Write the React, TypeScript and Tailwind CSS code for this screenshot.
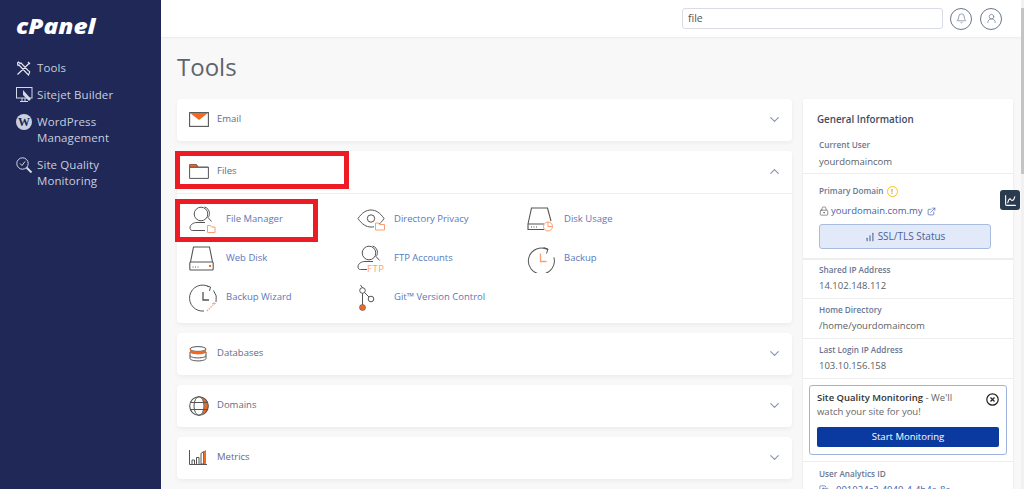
import React from "react";
import { ChevronDown, ChevronUp, Bell, UserRound, ExternalLink, LockKeyhole, ChartNoAxesColumnIncreasing, ChartSpline, Copy } from "lucide-react";

const D = "#555555";
const O = "#f26a21";
const L = "#fb9f72";

const Svg = ({ w, h, children }: { w: number; h: number; children: React.ReactNode }) => (
  <svg width={w} height={h} viewBox={`0 0 ${w} ${h}`} fill="none" className="shrink-0">{children}</svg>
);

const MailIcon = () => (
  <Svg w={20} h={15}>
    <rect x="0.600" y="0.600" width="18.800" height="13.800" stroke={D} strokeWidth="1.100" />
    <path d="M1 1h18l-9 7z" fill={O} />
  </Svg>
);
const FolderIcon = () => (
  <Svg w={20} h={15}>
    <path d="M0.600 4V14.400H19.400V3H9L7.500 0.600H0.600z" stroke={D} strokeWidth="1" />
    <path d="M0.600 3V0.600H7.500L9 3H19.400V4H0.600z" fill="#b5532a" />
    <path d="M1 2.200V1h6l.8 1.200z" fill={O} />
  </Svg>
);
const DbIcon = () => (
  <Svg w={18} h={16}>
    <ellipse cx="9" cy="3" rx="8" ry="2.400" stroke={D} strokeWidth="1" />
    <path d="M1 3v3c0 1.300 3.600 2.400 8 2.400s8-1.100 8-2.400V3c0 1.300-3.600 2.400-8 2.400S1 4.300 1 3z" fill={O} />
    <path d="M1 6v3.500c0 1.300 3.600 2.400 8 2.400s8-1.100 8-2.400V6M1 9.500v3c0 1.300 3.600 2.400 8 2.400s8-1.100 8-2.400v-3" stroke={D} strokeWidth="1" />
  </Svg>
);
const GlobeIcon = () => (
  <Svg w={20} h={20}>
    <path d="M12.500 1.300C14.600 4.500 15.300 7 15.300 10s-.7 5.500-2.800 8.700A9.400 9.400 0 0 0 19.400 10 9.400 9.400 0 0 0 12.500 1.300z" fill={O} />
    <circle cx="10" cy="10" r="9.300" stroke={D} strokeWidth="1.100" />
    <ellipse cx="10" cy="10" rx="5" ry="9.300" stroke={D} strokeWidth="1" />
    <path d="M1.500 6.500h17M1.500 13.500h17" stroke={D} strokeWidth="1" />
  </Svg>
);
const MetricsIcon = () => (
  <Svg w={18} h={15}>
    <path d="M0.500 0v14.500H18" stroke={D} strokeWidth="1" />
    <path d="M3 14v-4h2.500v4M7.500 14V7.500H10V14" stroke={D} strokeWidth="1" />
    <path d="M12 14V3.500l2.500-2V14z" stroke={D} strokeWidth="1" />
    <path d="M14.500 14V1.500L17 0v14z" fill={O} />
  </Svg>
);
const PersonBase = () => (
  <>
    <circle cx="12" cy="8" r="6.800" stroke={D} strokeWidth="1" />
    <path d="M15.500 1c3 .8 5 3.400 5 6.500 0 1.500-.5 2.800-1.500 4l3.500 4" stroke={D} strokeWidth="1" />
    <path d="M16 24.500H3.500C1.500 24.500 1 23 1 22c0-3.500 3.500-5.500 7-5.500h8" stroke={D} strokeWidth="1" />
  </>
);
const FileMgrIcon = () => (
  <Svg w={27} h={27}>
    <PersonBase />
    <path d="M18.500 19.500h3l1 1.500h3.500v5.500h-7.500z" stroke={L} strokeWidth="1" fill="#fff" />
  </Svg>
);
const FtpIcon = () => (
  <Svg w={32} h={27}>
    <PersonBase />
    <rect x="10" y="18" width="22" height="9" fill="#fff" />
    <text x="10" y="26.500" fontFamily="Open Sans, sans-serif" fontSize="9.500" fill={L} letterSpacing="0.500">FTP</text>
  </Svg>
);
const EyeIcon = () => (
  <Svg w={29} h={23}>
    <path d="M1 10.500C5 4.500 9.500 2 14 2s9 2.500 13 8.500c-1.500 2.500-3.200 4.300-5 5.500M17 18.800c-1 .2-2 .2-3 .2-4.500 0-9-2.500-13-8.500" stroke={D} strokeWidth="1" />
    <circle cx="14" cy="10.500" r="3.700" stroke={D} strokeWidth="1" />
    <path d="M18.500 15h3l1 1.500h5v5.500h-9z" stroke={L} strokeWidth="1" fill="#fff" />
  </Svg>
);
const DiskUsageIcon = () => (
  <Svg w={27} h={25}>
    <path d="M1 17V22.500H17M1 17L4.500 1H20.500L24 14M1 17H17" stroke={D} strokeWidth="1.100" />
    <path d="M4 20h1M6.500 20h1M9 20h1" stroke={D} strokeWidth="1.200" />
    <circle cx="21" cy="19.500" r="4.500" stroke={L} strokeWidth="1" fill="#fff" />
    <path d="M21 15v4.500h4.500" stroke={L} strokeWidth="1" />
  </Svg>
);
const WebDiskIcon = () => (
  <Svg w={25} h={25}>
    <path d="M1.500 16L4.500 1H20.500L23.500 16" stroke={D} strokeWidth="1.100" />
    <rect x="0.800" y="16" width="23.400" height="8" rx="1" stroke={D} strokeWidth="1.100" />
    <path d="M3.500 21h1M6 21h1M8.500 21h1" stroke={D} strokeWidth="1.200" />
    <rect x="20" y="19" width="2" height="2" fill={O} />
  </Svg>
);
const BackupIcon = () => (
  <Svg w={28} h={28}>
    <path d="M20 4.200A13 13 0 1 0 26.500 11" stroke={D} strokeWidth="1" transform="rotate(6 14 15)" />
    <path d="M16.500 2.500l4.500 1.500-1.500 4.500" stroke={D} strokeWidth="1" />
    <path d="M13.500 8.500v8h6" stroke={L} strokeWidth="1.300" />
  </Svg>
);
const WizardIcon = () => (
  <Svg w={29} h={28}>
    <path d="M20 2.800A13 13 0 1 0 15 27M27 18A13 13 0 0 0 24.500 6.500" stroke={D} strokeWidth="1" />
    <path d="M18 2l3.500 1-1 4" stroke={D} strokeWidth="1" />
    <path d="M14 8v8h6" stroke={D} strokeWidth="1.300" />
    <path d="M18 27l6-6" stroke={L} strokeWidth="1.200" strokeDasharray="1.500 1" />
    <path d="M25 18v3M23 19.500h4" stroke={L} strokeWidth="0.800" />
  </Svg>
);
const GitIcon = () => (
  <Svg w={18} h={26}>
    <circle cx="5.500" cy="5.500" r="2.800" stroke={D} strokeWidth="1" />
    <circle cx="14" cy="14" r="2.800" stroke={D} strokeWidth="1" />
    <path d="M5.500 8.300V20.500M7.500 7.500l4.500 4.500M5.500 2.700L3.500 0" stroke={D} strokeWidth="1" />
    <circle cx="5.500" cy="22.500" r="3" fill={O} stroke={D} strokeWidth="0.600" />
  </Svg>
);
const ToolsIcon = () => (
  <Svg w={15} h={15}>
    <path d="M1.500 13.500L13.500 2M12 1l2 2M1.500 2.500c0-.5.500-1.200 1-1.500l1.500 1.500 1-.5 7.500 8c1-.2 1.500.5 1 1.500l-1 2.500-2-2-7.500-8-1 .5z" stroke="#e8ebf3" strokeWidth="1.100" />
  </Svg>
);
const SitejetIcon = () => (
  <Svg w={17} h={16}>
    <rect x="0.500" y="0.500" width="15.500" height="10.500" stroke="#d4d9e6" strokeWidth="1" />
    <path d="M4 14.500h8M6 11v3.500M9 11v3.500" stroke="#d4d9e6" strokeWidth="1" />
    <path d="M7 3l8 9-2 2-6-6z" fill="#d4d9e6" />
  </Svg>
);
const WpIcon = () => (
  <div className="w-[16px] h-[16px] rounded-full bg-[#c9cfdf] flex items-center justify-center shrink-0">
    <span className="text-[#1f2857] text-[12px] font-bold leading-none font-['Liberation_Serif',serif]">W</span>
  </div>
);
const QualityIcon = () => (
  <Svg w={17} h={17}>
    <circle cx="6.500" cy="6.500" r="5.700" stroke="#d4d9e6" strokeWidth="1" />
    <path d="M4 6.500l2 2 3-4" stroke="#d4d9e6" strokeWidth="1" />
    <path d="M10.500 10.500l5 5" stroke="#d4d9e6" strokeWidth="2" />
  </Svg>
);

const SideItem = ({ icon, lines }: { icon: React.ReactNode; lines: string[] }) => (
  <div className="flex items-start">
    <div className="w-[21px] h-[16px] flex items-center justify-start shrink-0">{icon}</div>
    <div className="text-[11.500px] leading-[16px] text-[#c9cede] tracking-[0.100px]">
      {lines.map((l) => (
        <div key={l}>{l}</div>
      ))}
    </div>
  </div>
);

const Section = ({ icon, title, open }: { icon: React.ReactNode; title: string; open?: boolean }) => (
  <div className="h-[42px] flex items-center pr-[10px] pb-[1px]">
    <div className="w-[40px] pl-[12px] flex items-center">{icon}</div>
    <span className="text-[9.500px] text-[#5f6b85]">{title}</span>
    <div className="ml-auto text-[#8494ae]">
      {open ? <ChevronUp size={15} strokeWidth={1.800} /> : <ChevronDown size={15} strokeWidth={1.800} />}
    </div>
  </div>
);

const Card = ({ children }: { children: React.ReactNode }) => (
  <div className="bg-white rounded-[4px] shadow-[0_2px_4px_rgba(0,0,0,0.05)]">{children}</div>
);

const Tool = ({ icon, label, w }: { icon: React.ReactNode; label: string; w: string }) => (
  <div className={`flex items-center h-[39px] ${w}`}>
    <div className="w-[37px] flex items-center shrink-0">{icon}</div>
    <span className="text-[9.500px] text-[#5a78b8] whitespace-nowrap">{label}</span>
  </div>
);

const Info = ({ label, value, cls }: { label: string; value: string; cls: string }) => (
  <div className={`border-b border-[#eeeeee] px-[16px] ${cls}`}>
    <div className="text-[8.200px] leading-[12px] font-semibold text-[#6b7690]">{label}</div>
    <div className="mt-[2px] text-[9.500px] leading-[15px] text-[#5a5f66]">{value}</div>
  </div>
);

export default function App() {
  return (
    <div className="flex h-[489px] w-[1024px] overflow-hidden font-['Open_Sans',sans-serif] bg-[#f8f8f8] relative">
      <aside className="w-[161px] shrink-0 bg-[#1f2857] pl-[16px]">
        <div className="h-[60px] pt-[12px]">
          <div className="text-[21px] leading-[28px] font-extrabold italic text-white origin-left scale-x-[1.16] w-fit">cPanel</div>
        </div>
        <div className="flex flex-col gap-[11px]">
          <SideItem icon={<ToolsIcon />} lines={["Tools"]} />
          <SideItem icon={<SitejetIcon />} lines={["Sitejet Builder"]} />
          <SideItem icon={<WpIcon />} lines={["WordPress", "Management"]} />
          <SideItem icon={<QualityIcon />} lines={["Site Quality", "Monitoring"]} />
        </div>
      </aside>

      <div className="flex-1 min-w-0 flex flex-col relative">
        <header className="h-[37px] bg-white shadow-[0_1px_2px_rgba(0,0,0,0.06)] flex items-center shrink-0 pl-[521px]">
          <div className="w-[261px] h-[21px] border border-[#d9dce6] rounded-[3px] bg-white pl-[5px] text-[10.500px] leading-[19px] text-[#555]">file</div>
          <div className="ml-[7px] w-[22px] h-[22px] rounded-full border border-[#6b7690] flex items-center justify-center text-[#6b7690]">
            <Bell size={11} strokeWidth={1.500} />
          </div>
          <div className="ml-[8px] w-[22px] h-[22px] rounded-full border border-[#6b7690] flex items-center justify-center text-[#6b7690]">
            <UserRound size={11} strokeWidth={1.500} />
          </div>
        </header>

        <main className="flex-1 min-h-0 pl-[16px] pr-[11px]">
          <h1 className="text-[24px] leading-[34px] font-normal text-[#5e646c] mt-[13px]">Tools</h1>
          <div className="flex gap-[11px] mt-[15px] items-start">
            <div className="w-[615px] shrink-0 flex flex-col gap-[10px]">
              <Card><Section icon={<MailIcon />} title="Email" /></Card>
              <Card>
                <Section icon={<FolderIcon />} title="Files" open />
                <div className="border-t border-[#eeeeee] pl-[12px] pt-[6px] h-[130px]">
                  <div className="flex">
                    <Tool icon={<FileMgrIcon />} label="File Manager" w="w-[168px]" />
                    <Tool icon={<EyeIcon />} label="Directory Privacy" w="w-[170px]" />
                    <Tool icon={<DiskUsageIcon />} label="Disk Usage" w="w-[168px]" />
                  </div>
                  <div className="flex">
                    <Tool icon={<WebDiskIcon />} label="Web Disk" w="w-[168px]" />
                    <Tool icon={<FtpIcon />} label="FTP Accounts" w="w-[170px]" />
                    <Tool icon={<BackupIcon />} label="Backup" w="w-[168px]" />
                  </div>
                  <div className="flex">
                    <Tool icon={<WizardIcon />} label="Backup Wizard" w="w-[168px]" />
                    <Tool icon={<GitIcon />} label="Git™ Version Control" w="w-[170px]" />
                  </div>
                </div>
              </Card>
              <Card><Section icon={<DbIcon />} title="Databases" /></Card>
              <Card><Section icon={<GlobeIcon />} title="Domains" /></Card>
              <Card><Section icon={<MetricsIcon />} title="Metrics" /></Card>
            </div>

            <div className="w-[210px] shrink-0 bg-white rounded-[3px] shadow-[0_1px_3px_rgba(0,0,0,0.08)]">
              <div className="border-b border-[#eeeeee] px-[16px] pb-[4px]">
                <div className="pt-[13px] -ml-[2px] text-[9.800px] leading-[15px] font-semibold text-[#3f4b5e]">General Information</div>
                <div className="mt-[12px] text-[8.200px] leading-[12px] font-semibold text-[#6b7690]">Current User</div>
                <div className="mt-[3px] text-[9.500px] leading-[15px] text-[#5a5f66]">yourdomaincom</div>
              </div>
              <div className="border-b-[2px] border-[#eeeeee] px-[16px] h-[86px] pt-[11px]">
                <div className="flex items-center gap-[3px] text-[8.200px] leading-[12px] font-semibold text-[#6b7690]">
                  Primary Domain
                  <span className="w-[11px] h-[11px] rounded-full border-[1.500px] border-[#f5c518] text-[#d9a900] text-[7px] leading-none font-bold flex items-center justify-center">!</span>
                </div>
                <div className="mt-[6px] flex items-center gap-[1px] h-[16px]">
                  <LockKeyhole size={10} strokeWidth={1.500} className="text-[#555]" />
                  <span className="ml-[1px] text-[9.500px] text-[#3f5fa8]">yourdomain.com.my</span>
                  <ExternalLink size={9} strokeWidth={1.800} className="text-[#3f5fa8] ml-[3px]" />
                </div>
                <div className="mt-[5px] w-[172px] h-[25px] bg-[#e2e9f8] border border-[#a9bce0] rounded-[3px] flex items-center justify-center gap-[3px] text-[10px] text-[#4a6296]">
                  <ChartNoAxesColumnIncreasing size={10} strokeWidth={2.500} />
                  SSL/TLS Status
                </div>
              </div>
              <Info label="Shared IP Address" value="14.102.148.112" cls="pt-[4px] pb-[5px]" />
              <Info label="Home Directory" value="/home/yourdomaincom" cls="pt-[5px] pb-[5px]" />
              <Info label="Last Login IP Address" value="103.10.156.158" cls="pt-[5px] pb-[5px]" />
              <div className="border-b border-[#eeeeee] px-[6px] pt-[6px] pb-[6px]">
                <div className="h-[70px] border border-[#9db2dc] rounded-[3px] px-[7px] pt-[5px] relative">
                  <div className="text-[9.500px] leading-[14px] text-[#666] pr-[24px]">
                    <span className="font-semibold text-[#333]">Site Quality Monitoring</span> - We'll watch your site for you!
                  </div>
                  <svg width="13" height="13" viewBox="0 0 13 13" fill="none" className="absolute top-[7px] right-[7px]">
                    <circle cx="6.500" cy="6.500" r="5.700" stroke="#222" strokeWidth="1.200" />
                    <path d="M4.500 4.500l4 4M8.500 4.500l-4 4" stroke="#222" strokeWidth="1.200" />
                  </svg>
                  <div className="mt-[8px] h-[20px] bg-[#0a3aa0] rounded-[2px] flex items-center justify-center text-[9.500px] text-white">Start Monitoring</div>
                </div>
              </div>
              <div className="px-[16px] pt-[6px]">
                <div className="text-[8.200px] leading-[12px] font-semibold text-[#6b7690]">User Analytics ID</div>
                <div className="mt-[2px] flex items-center gap-[3px] text-[9.500px] leading-[15px] text-[#3f5fa8]">
                  <Copy size={10} strokeWidth={1.500} />
                  <span className="ml-[4px]">001024c3-4040-4-4b4a-8a</span>
                </div>
              </div>
            </div>
          </div>
        </main>

        {/* annotation rectangles over the page */}
        <div className="absolute left-[14px] top-[151px] w-[174px] h-[38px] border-[5px] border-[#ed1c24]" />
        <div className="absolute left-[14px] top-[199px] w-[143px] h-[43px] border-[5px] border-[#ed1c24]" />
        <div className="absolute left-[839px] top-[190px] w-[20px] h-[20px] rounded-[3px] bg-[#2b3b4f] flex items-center justify-center text-white">
          <ChartSpline size={13} strokeWidth={2} />
        </div>
      </div>
      <div className="absolute right-0 top-0 bottom-0 w-[3px] bg-[#f1f1f1]">
        <div className="mt-[8px] h-[166px] bg-[#c4c4c4]" />
      </div>
    </div>
  );
}
